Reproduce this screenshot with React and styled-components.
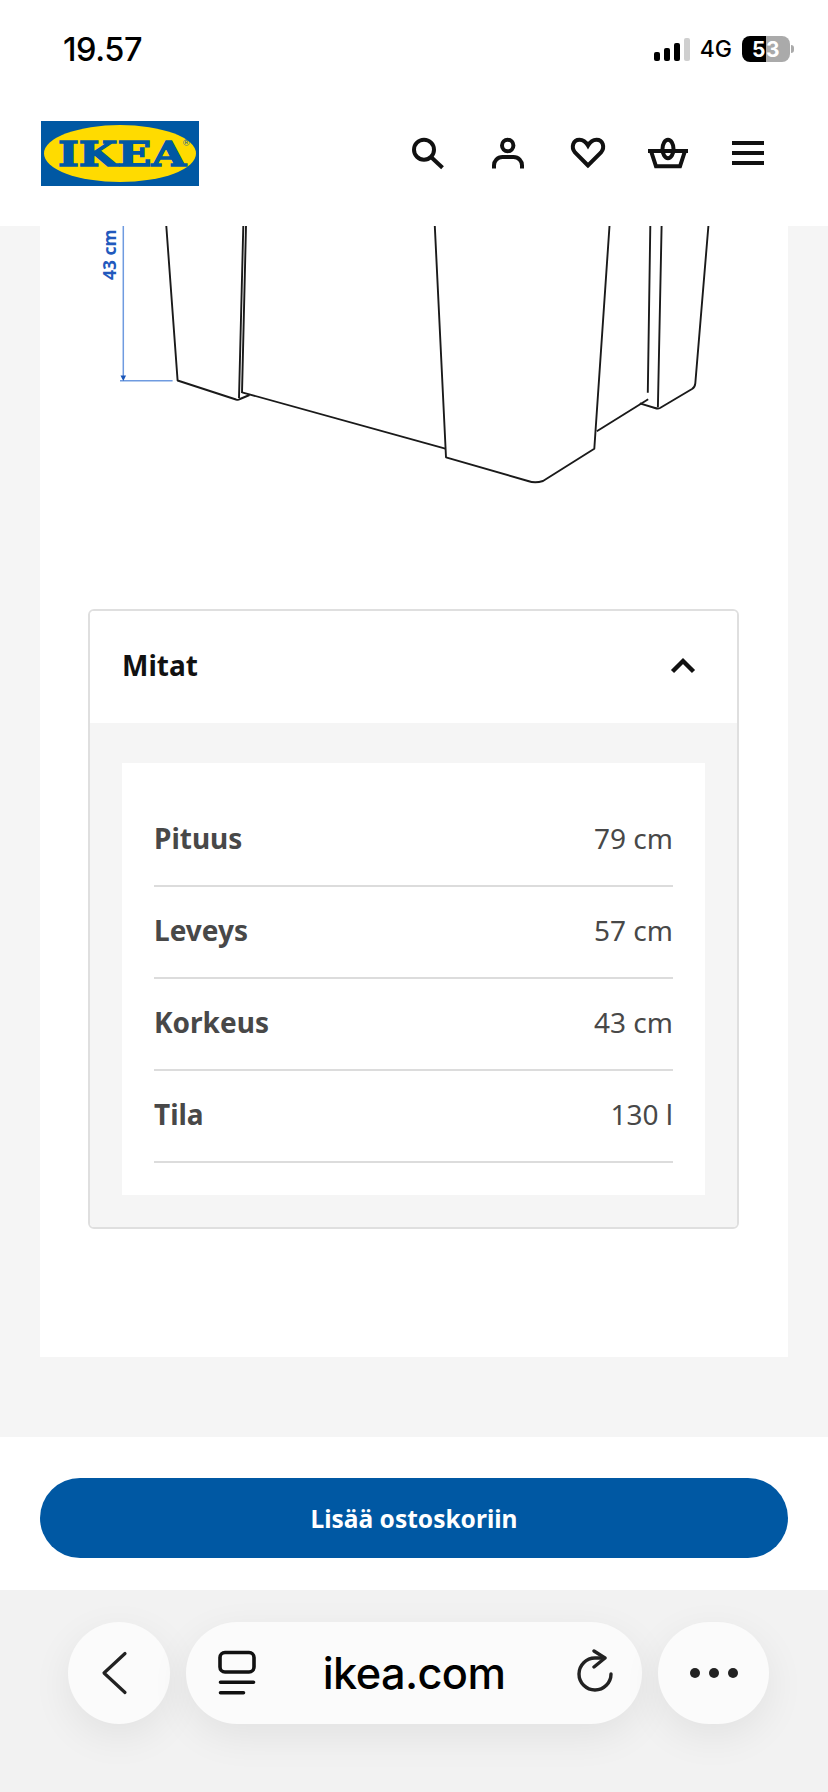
import React from "react";
import styled, { createGlobalStyle } from "styled-components";

const GlobalStyle = createGlobalStyle`
  html, body {
    margin: 0;
    padding: 0;
    background: #f5f5f5;
  }
  * {
    box-sizing: border-box;
  }
`;

const Page = styled.div`
  width: 828px;
  height: 1792px;
  overflow: hidden;
  display: flex;
  flex-direction: column;
  background: #f5f5f5;
  font-family: "Noto Sans", sans-serif;
`;

const StatusBar = styled.div`
  height: 100px;
  background: #fff;
  display: flex;
  justify-content: space-between;
  align-items: center;
  padding: 0 34px 0 63px;
`;
const Time = styled.div`
  font-family: Inter, sans-serif;
  font-size: 32.5px;
  font-weight: 500;
  color: #000;
  letter-spacing: -0.4px;
  margin-top: -2px;
`;
const StatusRight = styled.div`
  display: flex;
  align-items: center;
  margin-top: -2px;
`;
const Bars = styled.div`
  display: flex;
  align-items: flex-end;
  gap: 4px;
  height: 23px;
  margin-right: 10px;
`;
const Bar = styled.div`
  width: 6px;
  height: ${(p) => p.$h}px;
  border-radius: 2px;
  background: ${(p) => (p.$off ? "#cfcfcf" : "#000")};
`;
const Network = styled.div`
  font-family: Inter, sans-serif;
  font-size: 23px;
  font-weight: 500;
  color: #000;
  margin-right: 10px;
`;
const Battery = styled.div`
  width: 48px;
  height: 26px;
  border-radius: 8px;
  background: linear-gradient(90deg, #000 50%, #aaa 50%);
  color: #fff;
  font-family: Inter, sans-serif;
  font-size: 21px;
  font-weight: 700;
  display: flex;
  align-items: center;
  justify-content: center;
  letter-spacing: 0.5px;
`;
const BatteryNub = styled.div`
  width: 3px;
  height: 8px;
  margin-left: 1px;
  border-radius: 0 3px 3px 0;
  background: #aaa;
`;

const Header = styled.header`
  height: 126px;
  background: #fff;
  display: flex;
  justify-content: space-between;
  padding: 21px 40px 0 41px;
`;
const Logo = styled.svg`
  width: 158px;
  height: 65px;
  display: block;
`;
const LogoText = styled.text`
  font-family: "DejaVu Serif", serif;
  font-weight: 700;
  font-size: 34px;
  fill: #0058a3;
  stroke: #0058a3;
  stroke-width: 1.3px;
`;
const Nav = styled.nav`
  display: flex;
  height: 80px;
  margin-top: -8px;
`;
const NavItem = styled.div`
  width: 80px;
  height: 80px;
  display: flex;
  align-items: center;
  justify-content: center;
`;

const Panel = styled.main`
  margin: 0 40px;
  height: 1131px;
  background: #fff;
  padding: 0 49px 0 48px;
`;
const Drawing = styled.svg`
  display: block;
  width: 748px;
  height: 383px;
  margin: 0 -49px 0 -48px;
`;
const DimLabel = styled.text`
  font-family: "Noto Sans", sans-serif;
  font-weight: 700;
  font-size: 17.5px;
  fill: #2159bd;
`;

const Accordion = styled.section`
  border: 2px solid #dfdfdf;
  border-radius: 6px;
  overflow: hidden;
`;
const AccordionHead = styled.div`
  height: 112px;
  display: flex;
  align-items: center;
  justify-content: space-between;
  padding: 0 41px 4px 32px;
  background: #fff;
`;
const AccordionTitle = styled.h2`
  margin: 0;
  font-size: 28px;
  font-weight: 700;
  color: #111;
`;
const AccordionBody = styled.div`
  background: #f5f5f5;
  padding: 40px 32px 32px;
`;
const SpecList = styled.div`
  background: #fff;
  padding: 32px;
`;
const SpecRow = styled.div`
  height: 92px;
  border-bottom: 2px solid #dcdcdc;
  padding-bottom: 4px;
  display: flex;
  align-items: center;
  justify-content: space-between;
  color: #484848;
  font-size: 28px;
`;
const SpecName = styled.span`
  font-weight: 700;
`;
const SpecValue = styled.span`
  font-weight: 400;
`;

const BuyBar = styled.div`
  height: 153px;
  margin-top: 80px;
  background: #fff;
  padding: 41px 40px 0;
`;
const BuyButton = styled.button`
  display: block;
  width: 748px;
  height: 80px;
  border: 0;
  border-radius: 40px;
  background: #0058a3;
  color: #fff;
  font-family: "Noto Sans", sans-serif;
  font-size: 24.5px;
  font-weight: 700;
`;

const SafariBar = styled.div`
  flex: 1;
  background: #f2f2f2;
  display: flex;
  gap: 16px;
  padding: 32px 0 0 68px;
`;
const Pill = styled.div`
  width: ${(p) => p.$w}px;
  height: 102px;
  border-radius: 51px;
  background: #fbfbfb;
  box-shadow: 0 12px 40px rgba(0, 0, 0, 0.07);
  display: flex;
  align-items: center;
  justify-content: ${(p) => p.$justify || "center"};
  padding: ${(p) => p.$pad || "0"};
`;
const Url = styled.div`
  font-family: Inter, sans-serif;
  font-size: 43.3px;
  font-weight: 500;
  color: #000;
  letter-spacing: -0.6px;
  margin-right: 4px;
`;
const BackGlyph = styled.svg`
  margin-right: 8px;
`;

const SearchIcon = () => (
  <svg width="40" height="40" viewBox="0 0 40 40" fill="none" stroke="#111" strokeWidth="4">
    <circle cx="16" cy="16.700" r="10" />
    <path d="M22.500 23.500L34.500 34.800" />
  </svg>
);
const PersonIcon = () => (
  <svg width="40" height="40" viewBox="0 0 40 40" fill="none" stroke="#111" strokeWidth="4">
    <circle cx="19.700" cy="12.500" r="5.700" />
    <path d="M6 35.500V33a8.500 8.500 0 0 1 8.500-9h11a8.500 8.500 0 0 1 8.500 9v2.500" />
  </svg>
);
const HeartIcon = () => (
  <svg width="40" height="40" viewBox="0 0 40 40" fill="none" stroke="#111" strokeWidth="4">
    <path d="M20 32.500L7 19.500C2.800 14.500 5 6.700 11.500 6.700C15 6.700 18 9 20 12.500C22 9 25 6.700 28.500 6.700C35 6.700 37.200 14.500 33 19.500z" strokeLinejoin="miter" />
  </svg>
);
const BasketIcon = () => (
  <svg width="42" height="40" viewBox="0 0 42 40" fill="none" stroke="#111" strokeWidth="4">
    <path d="M1 18H41M4 18L9 33.300H33L38 18" />
    <ellipse cx="21" cy="16" rx="5.500" ry="9.300" />
  </svg>
);
const MenuIcon = () => (
  <svg width="40" height="40" viewBox="0 0 40 40" fill="#111">
    <rect x="4" y="8" width="32" height="4" />
    <rect x="4" y="18" width="32" height="4" />
    <rect x="4" y="28" width="32" height="4" />
  </svg>
);
const ChevronUp = () => (
  <svg width="26" height="18" viewBox="0 0 26 18" fill="none" stroke="#111" strokeWidth="4.400">
    <path d="M2.500 15.500L13 5l10.500 10.500" />
  </svg>
);
const BackIcon = () => (
  <BackGlyph width="30" height="46" viewBox="0 0 30 46" fill="none" stroke="#222" strokeWidth="3.200" strokeLinecap="round" strokeLinejoin="round">
    <path d="M25 3.500L4 23l21 19.500" />
  </BackGlyph>
);
const TabsIcon = () => (
  <svg width="40" height="46" viewBox="0 0 40 46" fill="none" stroke="#111" strokeWidth="3.600" strokeLinecap="round">
    <rect x="2" y="2.500" width="34" height="19.500" rx="5" />
    <path d="M2.500 32.300h33M2.500 42.700h23" />
  </svg>
);
const ReloadIcon = () => (
  <svg width="40" height="48" viewBox="0 0 40 48" fill="none" stroke="#222" strokeWidth="3.400" strokeLinecap="round" strokeLinejoin="round">
    <path d="M37 25A16 16 0 1 1 21 9H30" />
    <path d="M20 2L31 9L20 18" />
  </svg>
);
const DotsIcon = () => (
  <svg width="50" height="12" viewBox="0 0 50 12" fill="#222">
    <circle cx="6" cy="6" r="5" />
    <circle cx="25" cy="6" r="5" />
    <circle cx="44" cy="6" r="5" />
  </svg>
);

const specs = [
  { name: "Pituus", value: "79 cm" },
  { name: "Leveys", value: "57 cm" },
  { name: "Korkeus", value: "43 cm" },
  { name: "Tila", value: "130 l" },
];

const App = () => (
  <Page>
    <GlobalStyle />
    <StatusBar>
      <Time>19.57</Time>
      <StatusRight>
        <Bars>
          <Bar $h={9} />
          <Bar $h={13} />
          <Bar $h={18} />
          <Bar $h={23} $off />
        </Bars>
        <Network>4G</Network>
        <Battery>53</Battery>
        <BatteryNub />
      </StatusRight>
    </StatusBar>

    <Header>
      <Logo viewBox="0 0 158 65">
        <rect width="158" height="65" fill="#0058a3" />
        <ellipse cx="79" cy="32.500" rx="76" ry="28.500" fill="#ffdb00" />
        <LogoText x="17" y="44.500" textLength="128" lengthAdjust="spacingAndGlyphs">
          IKEA
        </LogoText>
        <text x="142" y="25" fontSize="9" fill="#0058a3" fontFamily="Liberation Sans, sans-serif">
          ®
        </text>
      </Logo>
      <Nav>
        <NavItem><SearchIcon /></NavItem>
        <NavItem><PersonIcon /></NavItem>
        <NavItem><HeartIcon /></NavItem>
        <NavItem><BasketIcon /></NavItem>
        <NavItem><MenuIcon /></NavItem>
      </Nav>
    </Header>

    <Panel>
      <Drawing viewBox="40 226 748 383" fill="none">
        <g stroke="#1a1a1a" strokeWidth="1.900" strokeLinejoin="round">
          <path d="M166.300 226L177.600 380.500L236 399.500Q238 400.500 240 399L249.500 395" />
          <path d="M243.300 226L239 398M246 226L242 393" />
          <path d="M242 392.300L445.300 448.700" />
          <path d="M434.800 226L446 457.300L528 481Q535 483.500 543 481L594.300 448.700L609.500 226" />
          <path d="M596.800 431.300L648.200 399.300" />
          <path d="M650.300 226L647.800 392.700M661.600 226L657.900 407.300" />
          <path d="M639.800 403.300L655 408Q658 409 660 408L692 389Q695 387 695.300 383.300L708.400 226" />
        </g>
        <path d="M123.300 226V377M120 380.700H172.600" stroke="#6f9be0" strokeWidth="1.500" />
        <path d="M120.500 375.500h5.600l-2.800 5.500z" fill="#1a55b8" />
        <DimLabel transform="translate(116 280) rotate(-90)">43 cm</DimLabel>
      </Drawing>

      <Accordion>
        <AccordionHead>
          <AccordionTitle>Mitat</AccordionTitle>
          <ChevronUp />
        </AccordionHead>
        <AccordionBody>
          <SpecList>
            {specs.map((spec) => (
              <SpecRow key={spec.name}>
                <SpecName>{spec.name}</SpecName>
                <SpecValue>{spec.value}</SpecValue>
              </SpecRow>
            ))}
          </SpecList>
        </AccordionBody>
      </Accordion>
    </Panel>

    <BuyBar>
      <BuyButton>Lisää ostoskoriin</BuyButton>
    </BuyBar>

    <SafariBar>
      <Pill $w={102}><BackIcon /></Pill>
      <Pill $w={456} $justify="space-between" $pad="0 28px 0 32px">
        <TabsIcon />
        <Url>ikea.com</Url>
        <ReloadIcon />
      </Pill>
      <Pill $w={111}><DotsIcon /></Pill>
    </SafariBar>
  </Page>
);

export default App;
